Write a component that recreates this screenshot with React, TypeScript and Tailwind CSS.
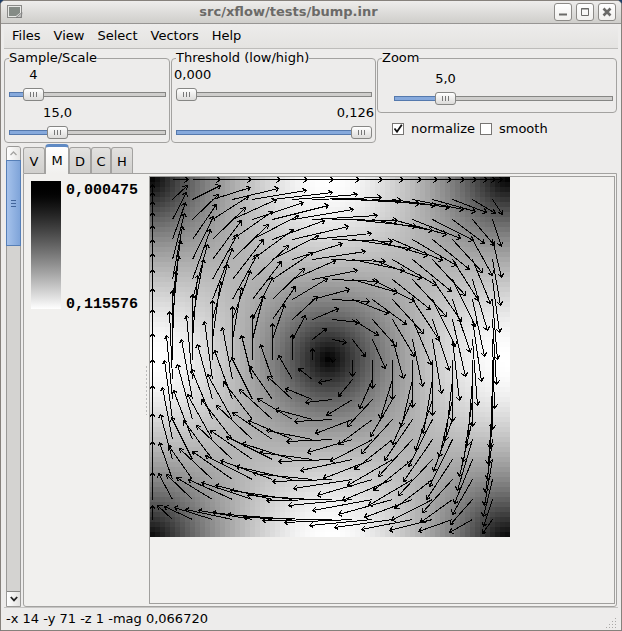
import React, { useState } from "react";

const CELLS = 72;
const CELL = 5;
const VIEW = CELLS * CELL;
const SAMPLE = 20;
const SCALE = 71;

function warp(t: number) {
  return t + 0.04 * Math.sin(4 * t);
}

function field(x: number, y: number) {
  const a = warp((Math.PI * x) / 356);
  const b = warp((Math.PI * (y - 1)) / 361);
  return { u: Math.sin(a) * Math.cos(b), v: -Math.cos(a) * Math.sin(b) };
}

function buildCells() {
  const out: { x: number; y: number; c: string }[] = [];
  for (let j = 0; j < CELLS; j++) {
    for (let i = 0; i < CELLS; i++) {
      const { u, v } = field(i * CELL + 2, j * CELL + 2);
      const g = Math.round(Math.min(1, Math.hypot(u, v)) * 255);
      out.push({ x: i * CELL, y: j * CELL, c: `rgb(${g},${g},${g})` });
    }
  }
  return out;
}

function buildArrows() {
  let d = "";
  for (let y = 2; y < VIEW; y += SAMPLE) {
    for (let x = 2; x < VIEW; x += SAMPLE) {
      const f = field(x, y);
      const u = (x === 2 ? 0 : f.u) * SCALE;
      const v = (y === 2 ? 0 : f.v) * SCALE;
      if (Math.hypot(u, v) < 2) continue;
      const tx = Math.round(x + u);
      const ty = Math.round(y + v);
      const t = Math.atan2(v, u);
      const head = [2.5, -2.5]
        .map((k) => [Math.round(tx + 4.6 * Math.cos(t + k)), Math.round(ty + 4.6 * Math.sin(t + k))]);
      d += `M${x} ${y}L${tx} ${ty}M${head[0][0]} ${head[0][1]}L${tx} ${ty}L${head[1][0]} ${head[1][1]}`;
    }
  }
  return d;
}

const cells = buildCells();
const arrows = buildArrows();

function VectorField() {
  return (
    <svg width={VIEW} height={VIEW} viewBox={`0 0 ${VIEW} ${VIEW}`} shapeRendering="crispEdges" role="img" aria-label="Vector field">
      {cells.map((c) => (
        <rect key={`${c.x}-${c.y}`} x={c.x} y={c.y} width={CELL} height={CELL} fill={c.c} />
      ))}
      <path d={arrows} transform="translate(0.5 0.5)" fill="none" stroke="#000" strokeWidth="1" />
    </svg>
  );
}

type ScaleProps = { label: string; text: string; start: number };

function Scale({ label, text, start }: ScaleProps) {
  const [value, setValue] = useState(start);
  const f = value / 1000;
  const justify = f === 0 ? "justify-start" : f === 1 ? "justify-end" : "justify-center";
  return (
    <div className="flex flex-col gap-[5px]">
      <div className="-mx-0.5 flex h-4">
        <div className="shrink-0" style={{ width: `calc((100% - 25px) * ${f})` }} />
        <output className={`flex w-[25px] shrink-0 whitespace-nowrap ${justify}`}>{text}</output>
      </div>
      <input
        type="range"
        aria-label={label}
        min={0}
        max={1000}
        value={value}
        onChange={(e) => setValue(Number(e.target.value))}
        style={{ "--fill": `${f * 100}%` } as React.CSSProperties}
        className="m-0 block h-[13px] w-full appearance-none bg-transparent [&::-webkit-slider-runnable-track]:h-[5px] [&::-webkit-slider-runnable-track]:[background:linear-gradient(to_right,#86a9dc_var(--fill),#cfcecc_var(--fill))_1px_1px/calc(100%_-_2px)_3px_no-repeat,linear-gradient(to_right,#5579ad_var(--fill),#868684_var(--fill))] [&::-webkit-slider-thumb]:-mt-1 [&::-webkit-slider-thumb]:h-[13px] [&::-webkit-slider-thumb]:w-[21px] [&::-webkit-slider-thumb]:appearance-none [&::-webkit-slider-thumb]:rounded-[3px] [&::-webkit-slider-thumb]:border [&::-webkit-slider-thumb]:border-[#868684] [&::-webkit-slider-thumb]:bg-[linear-gradient(#777,#777),linear-gradient(#777,#777),linear-gradient(#777,#777),linear-gradient(#fff,#dcdbd9)] [&::-webkit-slider-thumb]:bg-[length:1px_5px,1px_5px,1px_5px,100%_100%] [&::-webkit-slider-thumb]:bg-[position:6px_3px,9px_3px,12px_3px,0_0] [&::-webkit-slider-thumb]:bg-no-repeat"
      />
    </div>
  );
}

function Group({ title, className, children }: { title: string; className: string; children: React.ReactNode }) {
  return (
    <fieldset className={`min-w-0 rounded-[4px] border border-[#a3a2a0] pr-[3px] pl-1 ${className}`}>
      <legend className="h-4 whitespace-nowrap">{title}</legend>
      {children}
    </fieldset>
  );
}

function Check({ label, start }: { label: string; start: boolean }) {
  const [on, setOn] = useState(start);
  return (
    <label className="flex items-center gap-[7px]">
      <span className="grid">
        <input
          type="checkbox"
          checked={on}
          onChange={() => setOn(!on)}
          className="col-start-1 row-start-1 size-3 appearance-none border border-[#777573] bg-white"
        />
        {on && (
          <svg className="pointer-events-none col-start-1 row-start-1 size-3" viewBox="0 0 12 12" fill="none" stroke="#111" strokeWidth="1.8">
            <path d="M2.5 5.5L5 8.7L9.8 1.8" />
          </svg>
        )}
      </span>
      {label}
    </label>
  );
}

function WinButton({ label, children }: { label: string; children: React.ReactNode }) {
  return (
    <button aria-label={label} className="grid size-[18px] place-items-center rounded-[3px] border border-[#8d8b88] bg-linear-to-b from-white to-[#f1f0ee]">
      <svg width="12" height="12" viewBox="0 0 12 12" fill="none" stroke="#6b6a68">
        {children}
      </svg>
    </button>
  );
}

const menus = ["Files", "View", "Select", "Vectors", "Help"];
const tabs = [
  { name: "V", width: "w-[22px]" },
  { name: "M", width: "w-[24px]" },
  { name: "D", width: "w-[22px]" },
  { name: "C", width: "w-[20px]" },
  { name: "H", width: "w-[22px]" },
];

export default function App() {
  const [tab, setTab] = useState("M");
  return (
    <div className="flex h-screen min-h-[480px] flex-col bg-[#1d3d66] font-['DejaVu_Sans',sans-serif] text-[13px] leading-4 text-black">
      <div className="flex min-h-0 flex-1 flex-col overflow-hidden rounded-t-[5px] border border-[#86817c] bg-[#edeceb]">
        <header className="flex h-[23px] shrink-0 items-center border-b border-[#979593] bg-linear-to-b from-[#eeedec] to-[#cfcecb] pr-[5px] pl-1.5">
          <svg width="16" height="14" viewBox="0 0 16 14" aria-hidden="true">
            <rect x="0.5" y="0.5" width="14" height="12" fill="#e8e8e6" stroke="#8a8a88" />
            <path d="M2 2H13V8L9 11H2Z" fill="#858b86" />
            <path d="M9 12.5L15 7.5L14 12.5Z" fill="#c4c4c2" stroke="#777" strokeWidth="0.8" />
          </svg>
          <h1 className="flex-1 text-center text-[13px] font-bold text-[#6b6a68]">src/xflow/tests/bump.inr</h1>
          <div className="flex gap-1">
            <WinButton label="Minimize"><path d="M2 8.5H10" strokeWidth="2" /></WinButton>
            <WinButton label="Maximize"><path d="M2.5 2.5H9.5V9.5H2.5ZM2 3H10" /></WinButton>
            <WinButton label="Close"><path d="M2.5 2.5L9.5 9.5M9.5 2.5L2.5 9.5" strokeWidth="2.6" /></WinButton>
          </div>
        </header>

        <nav className="mx-[3px] flex h-[25px] shrink-0 items-center gap-[13px] border-b border-[#bdbcba] bg-linear-to-b from-[#edeceb] to-[#e4e3e1] px-2">
          {menus.map((m) => (
            <button key={m}>{m}</button>
          ))}
        </nav>

        <section className="flex shrink-0 items-start gap-px px-[3px] pt-px pr-1">
          <Group title="Sample/Scale" className="w-[166px] shrink-0 pb-[3px]">
            <div className="flex flex-col gap-1 pt-px">
              <Scale label="Sample" text="4" start={103} />
              <Scale label="Scale" text="15,0" start={280} />
            </div>
          </Group>
          <Group title="Threshold (low/high)" className="w-[205px] shrink-0 pb-[3px]">
            <div className="flex flex-col gap-1 pt-px">
              <Scale label="Low threshold" text="0,000" start={0} />
              <Scale label="High threshold" text="0,126" start={1000} />
            </div>
          </Group>
          <div className="flex min-w-0 flex-1 flex-col gap-2">
            <Group title="Zoom" className="pb-[7px]">
              <div className="pt-[5px] pl-3">
                <Scale label="Zoom" text="5,0" start={207} />
              </div>
            </Group>
            <div className="flex gap-[5px] pl-[15px]">
              <Check label="normalize" start={true} />
              <Check label="smooth" start={false} />
            </div>
          </div>
        </section>

        <main className="flex min-h-0 flex-1 gap-0.5 pr-1 pl-[5px]">
          <div className="mt-[3px] flex w-[15px] shrink-0 flex-col rounded-t-[3px] border border-[#9a9997] bg-[#d4d3d1]">
            <button aria-label="Scroll up" className="grid h-[13px] place-items-center rounded-t-[2px] bg-linear-to-r from-white to-[#e6e5e3]">
              <svg width="7" height="5" viewBox="0 0 7 5" fill="none" stroke="#a5a4a2" strokeWidth="1.3"><path d="M0.5 4L3.5 1L6.5 4" /></svg>
            </button>
            <div className="-mx-px grid h-[86px] place-items-center border border-[#567fb7] bg-linear-to-r from-[#a5c2eb] to-[#7fa4d9]">
              <div className="h-[7px] w-[5px] bg-[repeating-linear-gradient(#41649a_0_1px,transparent_1px_3px)]" />
            </div>
            <div className="flex-1" />
            <button aria-label="Scroll down" className="grid h-[15px] place-items-center border-t border-[#868684] bg-linear-to-r from-white to-[#e3e2e0]">
              <svg width="8" height="6" viewBox="0 0 8 6" fill="none" stroke="#222" strokeWidth="1.8"><path d="M0.8 1L4 4.4L7.2 1" /></svg>
            </button>
          </div>

          <div className="flex min-w-0 flex-1 flex-col">
            <div role="tablist" className="flex h-[30px] shrink-0 items-end">
              {tabs.map((t) =>
                t.name === tab ? (
                  <button
                    key={t.name}
                    role="tab"
                    aria-selected="true"
                    className={`z-10 -mb-px h-[30px] rounded-t-[4px] border border-t-[3px] border-b-0 border-[#a3a2a0] border-t-[#5f8ac4] bg-linear-to-b from-white to-[#f1f0ee] ${t.width}`}
                  >
                    {t.name}
                  </button>
                ) : (
                  <button
                    key={t.name}
                    role="tab"
                    aria-selected="false"
                    onClick={() => setTab(t.name)}
                    className={`h-[26px] rounded-t-[3px] border border-b-0 border-[#a3a2a0] bg-linear-to-b from-[#e2e1df] to-[#d0cfcd] pt-0.5 ${t.width}`}
                  >
                    {t.name}
                  </button>
                ),
              )}
            </div>
            <div className="flex min-h-0 flex-1 rounded-b-[3px] border border-[#a3a2a0] bg-[#f1f0ee] pt-0.5 pr-px pb-0.5">
              <div className="flex w-[121px] shrink-0 items-start gap-[5px] pt-[5px] pl-[7px]">
                <div className="h-32 w-[30px] bg-linear-to-b from-black to-white" />
                <div className="flex h-[134px] flex-col justify-between font-['Liberation_Mono',monospace] text-[15px] leading-5 font-bold">
                  <span>0,000475</span>
                  <span>0,115576</span>
                </div>
              </div>
              <div className="flex w-1 shrink-0 items-center">
                <div className="h-[50px] w-[3px] bg-[radial-gradient(circle,#bbb_35%,transparent_36%)] bg-[length:3px_4px]" />
              </div>
              <div className="min-w-0 flex-1 overflow-hidden border border-[#a09f9d]">
                <VectorField />
              </div>
            </div>
          </div>
        </main>

        <footer className="mx-[3px] flex h-[23px] shrink-0 items-center justify-between border-t border-[#c6c5c3] pl-0.5">
          <span>-x 14 -y 71 -z 1 -mag 0,066720</span>
          <svg width="12" height="12" viewBox="0 0 12 12" className="self-end" fill="#aaa9a7" aria-hidden="true">
            <path d="M9 0h1v1h-1zM6 3h1v1h-1zM9 3h1v1h-1zM3 6h1v1h-1zM6 6h1v1h-1zM9 6h1v1h-1zM0 9h1v1h-1zM3 9h1v1h-1zM6 9h1v1h-1zM9 9h1v1h-1z" />
          </svg>
        </footer>
      </div>
    </div>
  );
}
